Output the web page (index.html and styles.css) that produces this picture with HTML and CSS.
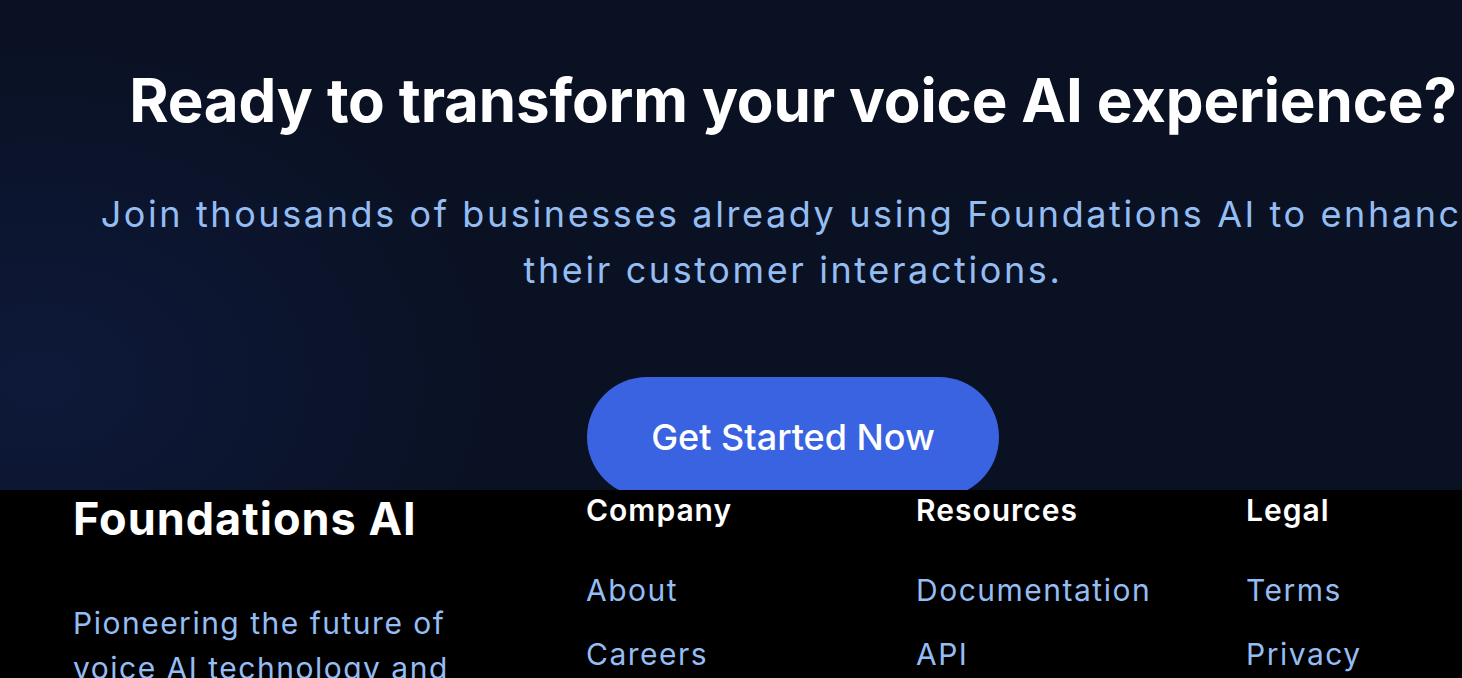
FILE: index.html
```html
<!DOCTYPE html>
<html lang="en">
<head>
<meta charset="utf-8">
<title>Foundations AI</title>
<link rel="stylesheet" href="styles.css">
</head>
<body>
<section class="cta">
  <div class="cta-inner">
    <h1 class="cta-title">Ready to transform your voice AI experience?</h1>
    <p class="cta-text">Join thousands of businesses already using Foundations AI to enhance their customer interactions.</p>
    <a class="cta-button" href="#">Get Started Now</a>
  </div>
</section>
<footer class="footer">
  <div class="footer-grid">
    <div class="footer-brand">
      <h2 class="brand-name">Foundations AI</h2>
      <p class="brand-text">Pioneering the future of voice AI technology and conversational experiences.</p>
    </div>
    <div class="footer-col">
      <h3 class="col-title">Company</h3>
      <ul class="col-list">
        <li><a href="#">About</a></li>
        <li><a href="#">Careers</a></li>
        <li><a href="#">Contact</a></li>
      </ul>
    </div>
    <div class="footer-col">
      <h3 class="col-title">Resources</h3>
      <ul class="col-list">
        <li><a href="#">Documentation</a></li>
        <li><a href="#">API</a></li>
        <li><a href="#">Blog</a></li>
      </ul>
    </div>
    <div class="footer-col">
      <h3 class="col-title">Legal</h3>
      <ul class="col-list">
        <li><a href="#">Terms</a></li>
        <li><a href="#">Privacy</a></li>
        <li><a href="#">Cookies</a></li>
      </ul>
    </div>
  </div>
</footer>
</body>
</html>
```
FILE: styles.css
```css
* { box-sizing: border-box; }
html, body { margin: 0; padding: 0; }
body {
  font-family: Inter, "Liberation Sans", sans-serif;
  background: #000;
  color: #fff;
  overflow-x: hidden;
}
a { text-decoration: none; color: inherit; }

.cta {
  height: 490px;
  background:
    radial-gradient(ellipse 650px 480px at 40px 380px, rgba(15, 28, 66, 0.75), rgba(15, 28, 66, 0) 72%),
    #0a1123;
}
.cta-inner {
  width: 1586px;
  padding-top: 64px;
  display: flex;
  flex-direction: column;
  align-items: center;
  text-align: center;
}
.cta-title {
  margin: 0;
  font-size: 60px;
  line-height: 72px;
  font-weight: 700;
  letter-spacing: -0.15px;
}
.cta-text {
  margin: 50px 0 0;
  max-width: 1420px;
  font-size: 36px;
  line-height: 56px;
  font-weight: 400;
  letter-spacing: 2.6px;
  color: #94bdf4;
}
.cta-button {
  margin-top: 79px;
  padding: 40px 64px;
  font-size: 36px;
  line-height: 40px;
  font-weight: 500;
  color: #fff;
  background: #3a63e2;
  border-radius: 60px;
}

.footer {
  position: relative;
  background: #000;
  padding: 2px 0 40px 73px;
}
.footer-grid {
  display: grid;
  grid-template-columns: 513px 330px 330px 1fr;
}
.brand-name {
  margin: 0;
  font-size: 45px;
  line-height: 53px;
  font-weight: 700;
  letter-spacing: 1px;
}
.brand-text {
  margin: 56px 0 0;
  width: 420px;
  font-size: 30px;
  line-height: 45px;
  letter-spacing: 1.5px;
  color: #94bdf4;
}
.col-title {
  margin: 0;
  font-size: 30px;
  line-height: 36px;
  font-weight: 600;
  letter-spacing: 1px;
}
.col-list {
  list-style: none;
  margin: 42px 0 0;
  padding: 0;
  display: flex;
  flex-direction: column;
  gap: 24px;
}
.col-list li {
  font-size: 30px;
  line-height: 40px;
  letter-spacing: 1.5px;
  color: #94bdf4;
}
```
